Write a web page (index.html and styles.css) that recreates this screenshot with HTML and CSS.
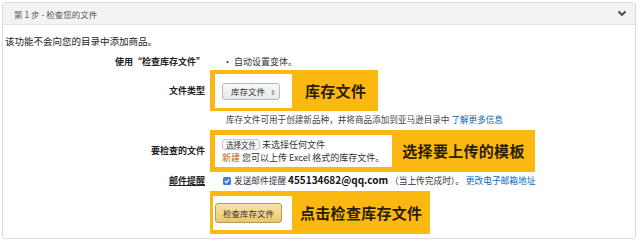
FILE: index.html
```html
<!DOCTYPE html>
<html lang="zh-CN">
<head>
    <meta charset="UTF-8">
    <title>检查您的文件</title>
    <link rel="stylesheet" href="styles.css">
</head>
<body>
    <div class="panel">
        <!-- Step header -->
        <div class="panel-head">
            <span>第 1 步 - 检查您的文件</span>
            <svg class="chevron" width="10" height="7" viewBox="0 0 10 7">
                <path d="M1.5 1.5 L5 5 L8.5 1.5" fill="none" stroke="#444" stroke-width="1.8"/>
            </svg>
        </div>

        <p class="intro">该功能不会向您的目录中添加商品。</p>

        <div class="row row-auto">
            <div class="label">使用“检查库存文件”</div>
            <div class="value">• 自动设置变体。</div>
        </div>

        <div class="row row-type">
            <div class="label">文件类型</div>
            <div class="value">
                <div class="mark">
                    <div class="mark-box">
                        <span class="select">库存文件 <span class="arrows">⇕</span></span>
                    </div>
                    <span class="mark-text">库存文件</span>
                </div>
            </div>
        </div>

        <div class="row row-desc">
            <div class="label"></div>
            <div class="value desc">库存文件可用于创建新品种，并将商品添加到亚马逊目录中 <a href="#">了解更多信息</a></div>
        </div>

        <div class="row row-file">
            <div class="label">要检查的文件</div>
            <div class="value">
                <div class="mark">
                    <div class="mark-box file-box">
                        <div><span class="file-btn">选择文件</span> 未选择任何文件</div>
                        <div><span class="new">新建</span> 您可以上传 Excel 格式的库存文件。</div>
                    </div>
                    <span class="mark-text">选择要上传的模板</span>
                </div>
            </div>
        </div>

        <div class="row row-mail">
            <div class="label"><u>邮件提醒</u></div>
            <div class="value">
                <svg class="check" width="8" height="8" viewBox="0 0 8 8">
                    <rect width="8" height="8" rx="1.5" fill="#3d7ed8"/>
                    <path d="M1.8 4.1 L3.4 5.6 L6.2 2.4" fill="none" stroke="#fff" stroke-width="1.2"/>
                </svg>
                发送邮件提醒 <b class="email">455134682@qq.com</b> （当上传完成时）。 <a href="#">更改电子邮箱地址</a>
            </div>
        </div>

        <div class="row row-submit">
            <div class="label"></div>
            <div class="value">
                <div class="mark">
                    <div class="mark-box submit-box">
                        <span class="check-btn">检查库存文件</span>
                    </div>
                    <span class="mark-text">点击检查库存文件</span>
                </div>
            </div>
        </div>
    </div>
</body>
</html>
```

FILE: styles.css
```css
* {
    margin: 0;
    padding: 0;
    box-sizing: border-box;
}

body {
    font-family: "Noto Sans CJK SC", "Liberation Sans", sans-serif;
    font-size: 9px;
    color: #222;
    background: #fff;
    padding: 2px 4px 0 2px;
}

a {
    color: #0066c0;
    text-decoration: none;
}

.panel {
    border: 1px solid #ddd;
    border-radius: 3px;
    height: 237px;
}

.panel-head {
    height: 22px;
    background: #f3f3f3;
    border-bottom: 1px solid #e2e2e2;
    display: flex;
    align-items: center;
    justify-content: space-between;
    padding: 0 8px 0 11px;
    color: #555;
    font-size: 8.5px;
}

.intro {
    margin-top: 9px;
    padding-left: 2px;
    line-height: 14px;
    font-size: 9.5px;
}

.row {
    display: grid;
    grid-template-columns: 202px 1fr;
    column-gap: 10px;
    align-items: center;
    line-height: 14px;
}

.label {
    text-align: right;
    font-weight: bold;
}

.row-auto {
    margin-top: 7px;
}

.row-auto .value {
    padding-left: 8px;
    color: #333;
}

.row-type {
    margin-top: 1px;
}

.row-desc {
    margin-top: 1px;
}

.desc {
    padding-left: 11px;
    color: #444;
    font-size: 8.6px;
}

.row-file {
    margin-top: 4px;
}

.row-mail {
    margin-top: 1px;
}

.row-mail .value {
    padding-left: 8px;
    color: #333;
    white-space: nowrap;
    font-size: 8.7px;
}

.check {
    vertical-align: -1px;
    margin-right: 1px;
}

.email {
    font-size: 10px;
    color: #111;
}

.row-submit {
    margin-top: 3px;
}

/* yellow highlight around a control */
.mark {
    display: inline-flex;
    align-items: center;
    background: #fbb810;
    margin-left: -5px;
    padding: 4px 12px 3px 5px;
    gap: 13px;
}

.mark-box {
    background: #fff;
    height: 34px;
    display: flex;
    align-items: center;
    padding: 0 7px;
    width: 77px;
}

.mark-text {
    font-size: 15px;
    font-weight: bold;
    color: #2b1d00;
    letter-spacing: 0.3px;
}

.select {
    display: inline-block;
    height: 17px;
    line-height: 15px;
    width: 58px;
    padding-left: 8px;
    border: 1px solid #b7b9bd;
    border-radius: 3px;
    background: linear-gradient(#f7f8fa, #e7e9ec);
    color: #333;
    font-size: 8.5px;
}

.arrows {
    font-size: 7px;
    color: #777;
    margin-left: 3px;
}

.row-file .mark {
    padding: 5px 10px 5px 5px;
    gap: 10px;
}

.file-box {
    width: auto;
    height: 32px;
    flex-direction: column;
    align-items: flex-start;
    justify-content: center;
    padding: 0 8px 0 7px;
    line-height: 13px;
    color: #333;
    white-space: nowrap;
}

.file-btn {
    display: inline-block;
    border: 1px solid #c8c8c8;
    border-radius: 3px;
    background: #f7f7f7;
    font-size: 7.5px;
    line-height: 9px;
    padding: 0 3px;
    color: #333;
}

.new {
    color: #c45500;
}

.row-submit .mark {
    padding: 5px 8px 4px 3px;
    gap: 8px;
}

.submit-box {
    width: 79px;
    padding: 0 2px;
}

.check-btn {
    display: inline-block;
    height: 20px;
    line-height: 18px;
    width: 67px;
    text-align: center;
    border: 1px solid #b39a5a;
    border-radius: 3px;
    background: linear-gradient(#f8e3ad, #eec66a);
    color: #333;
    font-size: 8.5px;
}
```
